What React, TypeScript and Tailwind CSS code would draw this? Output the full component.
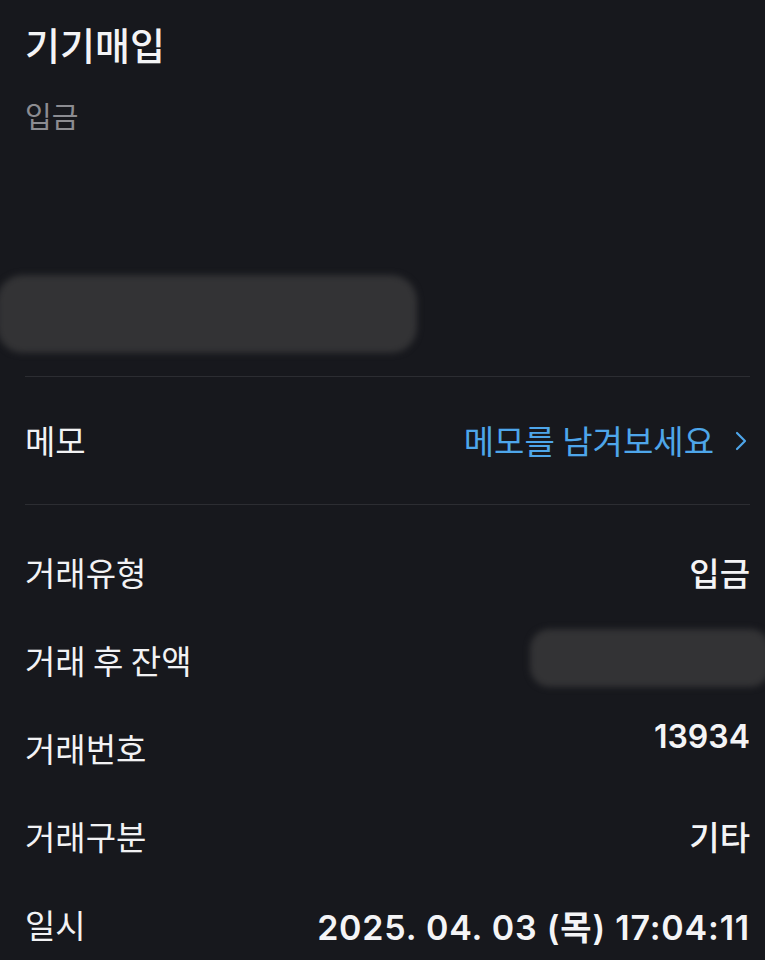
import React from "react";
import { ChevronRight } from "lucide-react";

const font = { fontFamily: '"Noto Sans CJK KR", "Noto Sans", sans-serif' };
const numFont = { fontFamily: 'Inter, "Noto Sans CJK KR", sans-serif' };

function Smudge({ className }: { className: string }) {
  return <div className={`bg-[#333335] blur-[3px] ${className}`} />;
}

function Row({ label, children }: { label: string; children?: React.ReactNode }) {
  return (
    <div className="flex h-[88px] items-center justify-between">
      <span className="text-[33px] text-[#f2f2f4]">{label}</span>
      {children}
    </div>
  );
}

export default function App() {
  return (
    <div className="min-h-[960px] overflow-hidden bg-[#17181d] pl-[25px] pr-[15px]" style={font}>
      <div className="pt-[19px] text-[38px] font-medium leading-[50px] text-[#f4f4f6]">기기매입</div>
      <div className="mt-[26px] text-[29px] leading-[40px] text-[#8c8c91]">입금</div>

      <Smudge className="-ml-[28px] mt-[140px] h-[78px] w-[420px] rounded-[26px]" />

      <div className="mt-[23px] h-px bg-[#2c2d32]" />

      <div className="flex h-[127px] items-center justify-between">
        <span className="text-[33px] text-[#f2f2f4]">메모</span>
        <span className="flex items-center gap-[11px] text-[33px] text-[#4ea6ea]">
          메모를 남겨보세요
          <ChevronRight className="h-[32px] w-[32px] -mr-[7px]" strokeWidth={1.6} />
        </span>
      </div>

      <div className="h-px bg-[#2c2d32]" />

      <div className="pt-[24px]">
        <Row label="거래유형">
          <span className="text-[33px] font-medium text-[#f4f4f6]">입금</span>
        </Row>
        <Row label="거래 후 잔액">
          <Smudge className="-mr-[20px] mt-[-6px] h-[58px] w-[240px] rounded-[20px]" />
        </Row>
        <Row label="거래번호">
          <span className="mb-[24px] text-[32px] font-semibold text-[#f4f4f6]" style={numFont}>
            13934
          </span>
        </Row>
        <Row label="거래구분">
          <span className="text-[33px] font-medium text-[#f4f4f6]">기타</span>
        </Row>
        <Row label="일시">
          <span className="mt-[4px] text-[34px] font-semibold tracking-[0.8px] text-[#f4f4f6]" style={numFont}>
            2025. 04. 03 (목) 17:04:11
          </span>
        </Row>
      </div>
    </div>
  );
}
